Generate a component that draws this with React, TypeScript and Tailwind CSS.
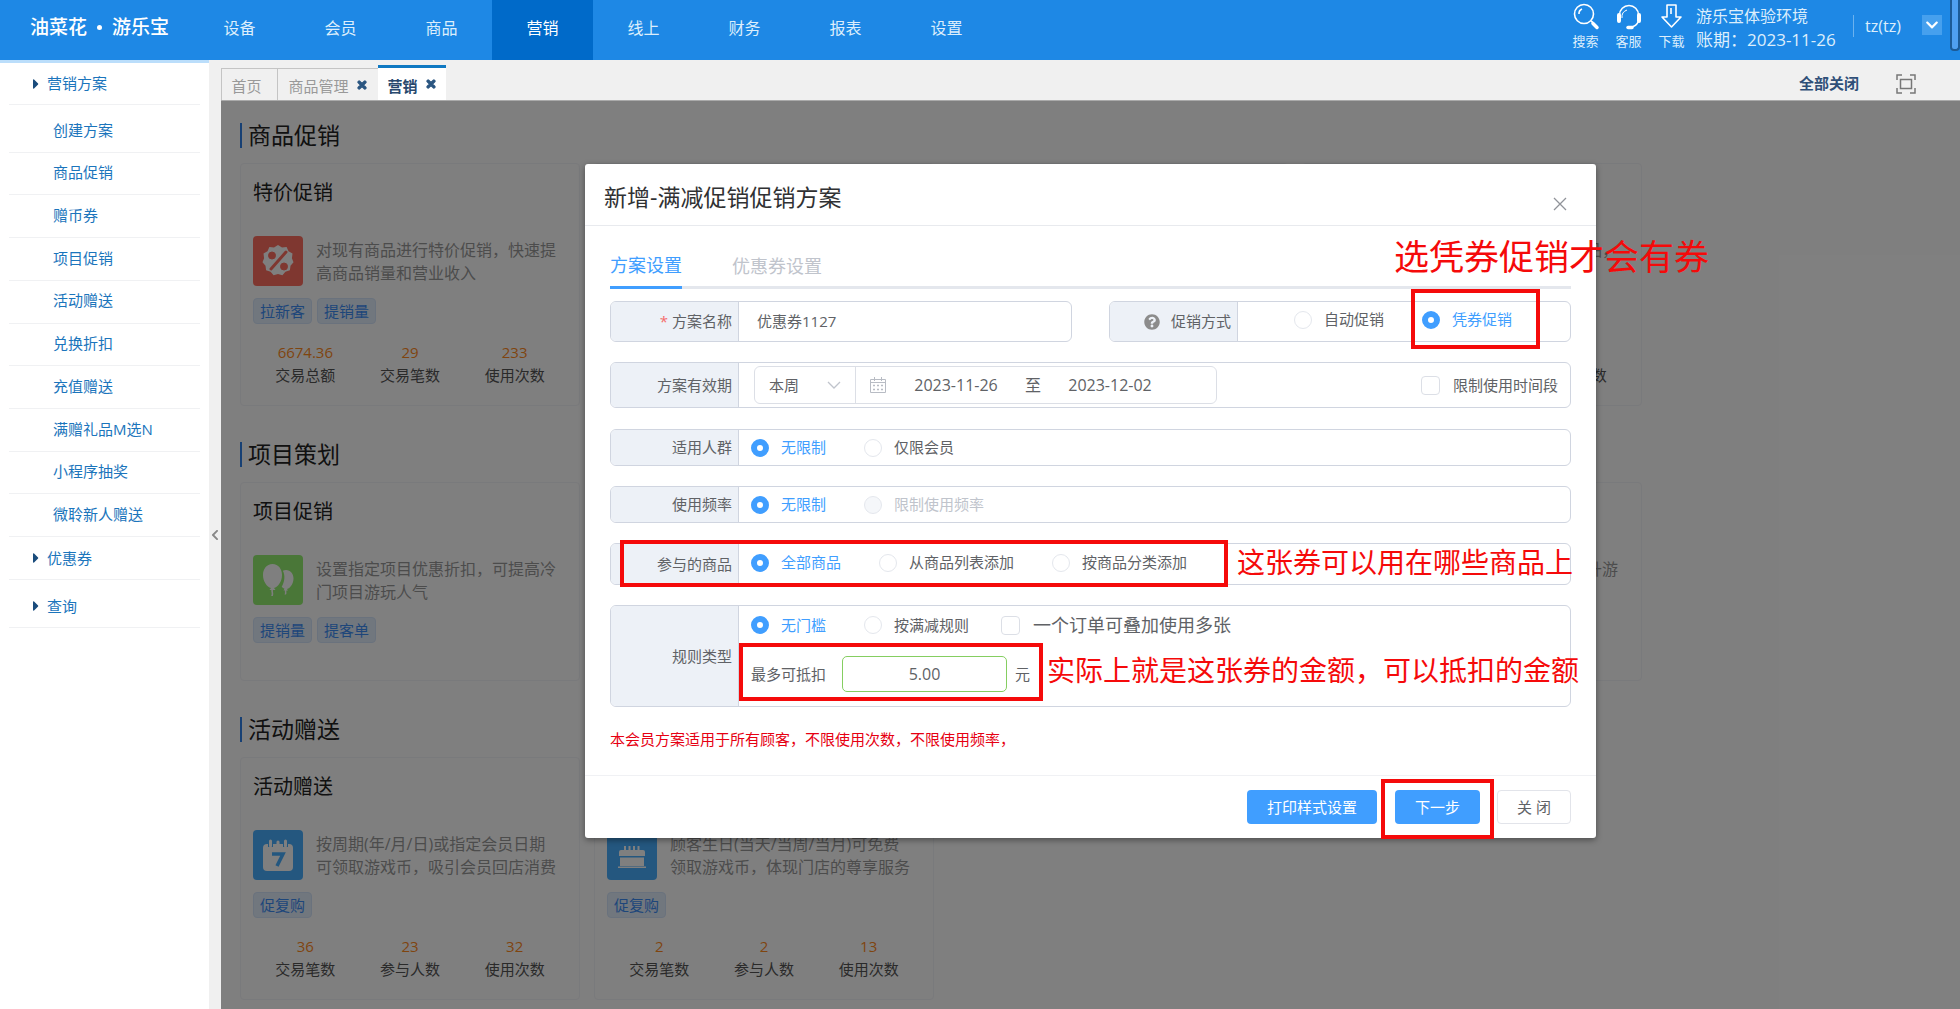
import { type ReactNode } from "react";
import { FaCaretRight, FaChevronDown, FaChevronLeft, FaQuestionCircle, FaTimes } from "react-icons/fa";

const navItems = ["设备", "会员", "商品", "营销", "线上", "财务", "报表", "设置"];

const planMenu = [
  "创建方案",
  "商品促销",
  "赠币券",
  "项目促销",
  "活动赠送",
  "兑换折扣",
  "充值赠送",
  "满赠礼品M选N",
  "小程序抽奖",
  "微聆新人赠送",
];

interface Promo {
  title?: string;
  desc?: string;
  icon: "percent" | "balloon" | "calendar" | "cake";
  tags?: string[];
  stats?: [string, string][];
}

const sections: { title: string; cards: Promo[] }[] = [
  {
    title: "商品促销",
    cards: [
      {
        title: "特价促销",
        desc: "对现有商品进行特价促销，快速提\n高商品销量和营业收入",
        icon: "percent",
        tags: ["拉新客", "提销量"],
        stats: [["6674.36", "交易总额"], ["29", "交易笔数"], ["233", "使用次数"]],
      },
      { icon: "percent" },
      { icon: "percent" },
      {
        desc: "满足消费金额条件即可换购商品，",
        icon: "percent",
        stats: [["", ""], ["", ""], ["", "使用次数"]],
      },
    ],
  },
  {
    title: "项目策划",
    cards: [
      {
        title: "项目促销",
        desc: "设置指定项目优惠折扣，可提高冷\n门项目游玩人气",
        icon: "balloon",
        tags: ["提销量", "提客单"],
      },
      { icon: "balloon" },
      { icon: "balloon" },
      { desc: "设置项目套票组合优惠方案提升游", icon: "balloon" },
    ],
  },
  {
    title: "活动赠送",
    cards: [
      {
        title: "活动赠送",
        desc: "按周期(年/月/日)或指定会员日期\n可领取游戏币，吸引会员回店消费",
        icon: "calendar",
        tags: ["促复购"],
        stats: [["36", "交易笔数"], ["23", "参与人数"], ["32", "使用次数"]],
      },
      {
        desc: "顾客生日(当天/当周/当月)可免费\n领取游戏币，体现门店的尊享服务",
        icon: "cake",
        tags: ["促复购"],
        stats: [["2", "交易笔数"], ["2", "参与人数"], ["13", "使用次数"]],
      },
    ],
  },
];

const iconBg = {
  percent: "bg-[#ff6f61]",
  balloon: "bg-[#94ee70]",
  calendar: "bg-[#48aeff]",
  cake: "bg-[#48aeff]",
};

function PromoIcon({ name }: { name: Promo["icon"] }) {
  return (
    <div className={`h-[50px] w-[50px] shrink-0 rounded ${iconBg[name]}`}>
      <svg viewBox="0 0 50 50" className="h-full w-full" fill="#fff">
        {name === "percent" && (
          <>
            <path d="M25 9l4 2.4 4.6-.4 1.9 4.2 4 2.4-.6 4.6 1.6 4-3 3.5-.6 4.6-4.5 1.4-3 3.5-4.4-1.2-4.4 1.2-3-3.5-4.5-1.4-.6-4.6-3-3.5 1.6-4-.6-4.6 4-2.4 1.9-4.2 4.6.4z" />
            <g stroke="#ff6f61" fill="#ff6f61">
              <path d="M33 16L18 33" strokeWidth="3" strokeLinecap="round" />
              <circle cx="19" cy="19.5" r="3.5" />
              <circle cx="31" cy="30.5" r="3.5" />
            </g>
          </>
        )}
        {name === "balloon" && (
          <>
            <path d="M33 15c4.500 0 7.500 4 7.500 8.500 0 5-3 9.500-6.500 10.500l1 1.500h-1.500c-.5 1.500.5 2.500-.5 4h-1.500c1-1.500 0-2.500.5-4h-1.500l1-1.700c-1-.3-2-1-2.800-2 2.800-4.500 3.800-11 1.200-16 1-.5 2-.8 3.100-.8z" />
            <path d="M19.500 9c6 0 9.500 5 9.500 11 0 6.500-4 12-8 13l1.500 2H20c-.5 2 1 3-.2 6h-1.600c1.200-2.500-.2-4 .1-6h-1.800l1.500-2c-4-1-8-6.500-8-13 0-6 3.500-11 9.500-11z" />
          </>
        )}
        {name === "calendar" && (
          <>
            <rect x="10" y="14" width="30" height="27" rx="4" />
            <path d="M17.500 10v7M32.500 10v7" stroke="#48aeff" strokeWidth="5" />
            <path d="M17.500 11v5M25 12v4M32.500 11v5" stroke="#fff" strokeWidth="3" strokeLinecap="round" />
            <path d="M19 24h11l-6 12" fill="none" stroke="#48aeff" strokeWidth="3.500" />
          </>
        )}
        {name === "cake" && (
          <>
            <path d="M18 16v5M22.500 16v5M27 16v5M31.500 16v5" stroke="#fff" strokeWidth="2" />
            <path d="M12 22q0-2 2-2h22q2 0 2 2v4H12zM13 27.500h24V36H13zM11 36.500h28V38H11z" />
          </>
        )}
      </svg>
    </div>
  );
}

function PromoCard({ promo }: { promo: Promo }) {
  return (
    <article className={`w-[340px] rounded border border-[#f2f4f8] px-3 pt-[14px] ${promo.stats ? "pb-[18px]" : "pb-[37px]"}`}>
      <h3 className="h-[30px] text-[20px] leading-[30px] text-[#222]">{promo.title}</h3>
      <div className="mt-[28px] flex h-[50px] gap-[13px]">
        <PromoIcon name={promo.icon} />
        <p className="mt-[3px] whitespace-pre-line text-[16px] leading-[23px] text-[#999]">{promo.desc}</p>
      </div>
      <div className="mt-[12px] flex h-[26px] gap-[5px]">
        {promo.tags?.map((tag) => (
          <span key={tag} className="rounded border border-[#d5e5fa] bg-[#e3eefc] px-[6px] text-[15px] leading-[24px] text-[#3d8df5]">
            {tag}
          </span>
        ))}
      </div>
      {promo.stats && (
        <dl className="mt-[17px] grid grid-cols-3 text-center text-[15px] leading-[23px]">
          {promo.stats.map(([value, label], i) => (
            <div key={i} className="flex flex-col-reverse">
              <dt className="h-[23px] text-[#555]">{label}</dt>
              <dd className="h-[23px] text-[#ff8a1e]">{value}</dd>
            </div>
          ))}
        </dl>
      )}
    </article>
  );
}

function Header() {
  return (
    <header className="relative flex h-[60px] shrink-0 items-stretch bg-[#1e88e5] text-white">
      <div className="flex w-[189px] shrink-0 items-center gap-[10px] pb-[5px] pl-[30px] text-[19px] font-medium">
        <span>油菜花</span>
        <i className="h-[5px] w-[5px] rounded-full bg-white" />
        <span>游乐宝</span>
      </div>
      <nav className="flex">
        {navItems.map((item) => (
          <a
            key={item}
            href="#"
            className={`flex w-[101px] items-center justify-center pb-[5px] text-[16px] ${item === "营销" ? "bg-[#006ac9]" : "text-[#dceefc]"}`}
          >
            {item}
          </a>
        ))}
      </nav>
      <div className="ml-auto flex pr-[18px] text-[#dceefc]">
        <HeaderAction label="搜索">
          <circle cx="12" cy="12" r="9.500" />
          <path d="M7 12a5 5 0 0 1 3-5M19 19l2 1.500" />
          <path d="M21 21.500l4 4" strokeWidth="3.500" strokeLinecap="round" />
        </HeaderAction>
        <HeaderAction label="客服">
          <path d="M4.500 13a9.500 9.500 0 0 1 19 0M23.500 19q-2 5-6 5.500" />
          <path d="M7 16a7.500 7.500 0 0 1 5-8" strokeWidth="1" />
          <path d="M4 13v6M24 13v6" strokeWidth="4" strokeLinecap="round" />
          <path d="M13 25.500h4" strokeWidth="3.500" strokeLinecap="round" />
        </HeaderAction>
        <HeaderAction label="下载">
          <path d="M9 3h9v12h5l-9.500 10L4 15h5zM13 6v6" strokeLinejoin="round" />
        </HeaderAction>
        <div className="ml-[3px] flex items-start">
          <div className="w-[157px] pt-[5px] text-[16px] leading-[23px]">
            <div>游乐宝体验环境</div>
            <div className="text-[17px]">账期：2023-11-26</div>
          </div>
          <div className="mt-[15px] w-[69px] border-l border-[#6bb2ef] pl-[11px] text-[16px] leading-[22px]">tz(tz)</div>
          <button aria-label="账户" className="mt-[15px] flex h-5 w-5 items-center justify-center bg-[#46a0ee] text-white">
            <FaChevronDown className="h-[14px] w-[14px]" />
          </button>
        </div>
      </div>
      <i className="absolute right-0 top-0 h-[51px] w-[10px] rounded-b border-2 border-t-0 border-[#1c5a96] bg-[#4f9ff0]" />
    </header>
  );
}

function HeaderAction({ label, children }: { label: string; children: ReactNode }) {
  return (
    <button className="flex w-[43px] flex-col items-center pt-[2px] text-[13px] leading-[23px]">
      <svg viewBox="0 0 28 28" className="h-7 w-7" fill="none" stroke="#fff" strokeWidth="1.6">
        {children}
      </svg>
      {label}
    </button>
  );
}

function Sidebar() {
  return (
    <aside className="w-[209px] shrink-0 border-t-[3px] border-[#bbdefb] bg-white px-[9px] text-[15px] text-[#1b75bc]">
      <MenuGroup label="营销方案" className="h-[42px]" />
      <ul className="flex h-[432px] flex-col pt-[5px]">
        {planMenu.map((item) => (
          <li key={item} className="flex flex-1 items-center border-b border-[#f0f1f3] pb-[2px] pl-[44px]">
            <a href="#">{item}</a>
          </li>
        ))}
      </ul>
      <MenuGroup label="优惠券" className="h-[43px]" />
      <MenuGroup label="查询" className="h-[48px] pt-[5px]" />
    </aside>
  );
}

function MenuGroup({ label, className }: { label: string; className: string }) {
  return (
    <a href="#" className={`flex items-center gap-[6px] border-b border-[#f0f1f3] pl-[22px] ${className}`}>
      <FaCaretRight className="h-4 w-[10px] text-[#1a4c7c]" />
      {label}
    </a>
  );
}

function CloseMark() {
  return <FaTimes className="mb-1 h-3 w-3 text-[#2a5580]" stroke="currentColor" strokeWidth={50} />;
}

function TabBar() {
  return (
    <div className="flex h-[41px] shrink-0 items-end border-b border-[#aaa] bg-[#f0f0f0] text-[15px] text-[#999]">
      <button className="h-8 w-[57px] border border-b-0 border-[#c4c4c4] pr-[6px] pt-1">首页</button>
      <button className="flex h-8 w-[100px] items-center justify-center gap-[7px] border-t border-[#c4c4c4] pt-1">
        商品管理 <CloseMark />
      </button>
      <button className="flex h-[35px] w-[68px] items-center justify-center gap-[7px] border-t-[3px] border-[#1079c2] bg-white pt-1 font-bold text-[#28486e]">
        营销 <CloseMark />
      </button>
      <button className="mb-[6px] ml-auto font-bold text-[#2f4f78]">全部关闭</button>
      <button aria-label="全屏" className="mb-[6px] ml-[37px] mr-[44px]">
        <svg viewBox="0 0 20 20" className="h-5 w-5" fill="none" stroke="#777" strokeWidth="1.500">
          <path d="M1 6V1h5M14 1h5v5M19 14v5h-5M6 19H1v-5M4.500 5.500h11v9h-11z" />
        </svg>
      </button>
    </div>
  );
}

interface ChoiceProps {
  name: string;
  label: string;
  checked?: boolean;
  disabled?: boolean;
}

function Choice({ name, label, checked, disabled }: ChoiceProps) {
  return (
    <label className={`flex items-center gap-3 ${checked ? "text-[#409eff]" : disabled ? "text-[#c0c4cc]" : ""}`}>
      <input
        type="radio"
        name={name}
        defaultChecked={checked}
        disabled={disabled}
        className="h-[18px] w-[18px] appearance-none rounded-full border border-[#e4e7ed] bg-white checked:border-[6px] checked:border-[#409eff] disabled:bg-[#f5f7fa]"
      />
      {label}
    </label>
  );
}

function Check({ label, className = "" }: { label: string; className?: string }) {
  return (
    <label className={`flex items-center gap-[13px] ${className}`}>
      <input type="checkbox" className="h-[19px] w-[19px] appearance-none rounded-sm border border-[#dcdfe6] bg-white checked:bg-[#409eff]" />
      {label}
    </label>
  );
}

function Row({ label, className, children }: { label: ReactNode; className: string; children: ReactNode }) {
  return (
    <div className={`flex overflow-hidden rounded-md border border-[#d0d5e0] ${className}`}>
      <div className="flex w-[128px] shrink-0 items-center justify-end border-r border-[#d0d5e0] bg-[#edf1f7] pr-[6px]">{label}</div>
      <div className="flex flex-1 items-center">{children}</div>
    </div>
  );
}

function PlanDialog() {
  return (
    <section role="dialog" aria-label="新增-满减促销促销方案" className="relative mt-[63px] w-full max-w-[1011px] rounded-[3px] bg-white text-[15px] text-[#606266] shadow-[0_2px_6px_rgba(0,0,0,0.4)]">
      <div className="flex h-[62px] items-center justify-between border-b border-[#e8eaee] pl-[19px] pr-[29px] pt-[6px]">
        <h2 className="text-[23px] text-[#303133]">新增-满减促销促销方案</h2>
        <button aria-label="关闭" className="mt-3">
          <svg viewBox="0 0 14 14" className="h-[14px] w-[14px]" fill="none" stroke="#909399" strokeWidth="1.300">
            <path d="M1 1l12 12M13 1L1 13" />
          </svg>
        </button>
      </div>

      <div className="px-[25px] pb-6 pt-6">
        <div className="flex h-[39px] gap-[50px] border-b-[3px] border-[#e4e7ed] text-[18px]">
          <button className="-mb-[3px] border-b-[3px] border-[#409eff] pb-[6px] text-[#409eff]">方案设置</button>
          <button className="pb-[3px] text-[#c0c4cc]">优惠券设置</button>
        </div>

        <form className="mt-3 flex flex-col gap-5">
          <div className="grid grid-cols-2 gap-[37px]">
            <Row className="h-[41px]" label={<label htmlFor="plan-name"><span className="mr-1 text-[#f56c6c]">*</span>方案名称</label>}>
              <input id="plan-name" defaultValue="优惠券1127" className="h-full w-full px-[18px] pb-[3px] outline-none" />
            </Row>
            <Row className="h-[41px]" label={<span className="flex items-center gap-[11px]"><FaQuestionCircle className="h-4 w-4 text-[#8c8c8c]" />促销方式</span>}>
              <div className="flex gap-[38px] pb-1 pl-[56px]">
                <Choice name="mode" label="自动促销" />
                <Choice name="mode" label="凭券促销" checked />
              </div>
            </Row>
          </div>

          <Row className="h-[46px]" label="方案有效期">
            <div className="ml-[15px] flex h-[38px] w-[463px] items-center rounded-md border border-[#dcdfe6] text-[16px]">
              <div className="relative h-full w-[101px] border-r border-[#dcdfe6]">
                <select aria-label="周期" className="h-full w-full appearance-none pl-[14px] text-[15px] outline-none">
                  <option>本周</option>
                </select>
                <svg viewBox="0 0 14 8" className="pointer-events-none absolute right-[14px] top-[14px] h-2 w-[14px]" fill="none" stroke="#c0c4cc" strokeWidth="1.300">
                  <path d="M1 1l6 6 6-6" />
                </svg>
              </div>
              <svg viewBox="0 0 16 16" className="ml-[14px] h-4 w-4" fill="none" stroke="#b8bcc4">
                <path d="M.5 2.500h15v13H.5zM.5 5.500h15M4.500 0v4M11.500 0v4" />
                <path d="M3 8.500h10M3 12.500h10" strokeDasharray="2 2" strokeWidth="1.400" />
              </svg>
              <input aria-label="开始日期" defaultValue="2023-11-26" className="ml-[14px] w-[112px] text-center outline-none" />
              <span className="px-[13px]">至</span>
              <input aria-label="结束日期" defaultValue="2023-12-02" className="w-[112px] text-center outline-none" />
            </div>
            <Check label="限制使用时间段" className="ml-auto pr-3" />
          </Row>

          <Row className="mt-[1px] h-[37px]" label="适用人群">
            <div className="flex gap-[38px] pl-3">
              <Choice name="crowd" label="无限制" checked />
              <Choice name="crowd" label="仅限会员" />
            </div>
          </Row>

          <Row className="h-[37px]" label="使用频率">
            <div className="flex gap-[38px] pl-3">
              <Choice name="frequency" label="无限制" checked />
              <Choice name="frequency" label="限制使用频率" disabled />
            </div>
          </Row>

          <Row className="h-[42px]" label="参与的商品">
            <div className="flex gap-[38px] pb-[3px] pl-3">
              <Choice name="goods" label="全部商品" checked />
              <Choice name="goods" label="从商品列表添加" />
              <Choice name="goods" label="按商品分类添加" />
            </div>
          </Row>

          <Row className="h-[102px]" label="规则类型">
            <div className="flex flex-col gap-[17px] pb-[9px] pl-3">
              <div className="flex h-7 items-center gap-[38px]">
                <Choice name="rule" label="无门槛" checked />
                <Choice name="rule" label="按满减规则" />
                <Check label="一个订单可叠加使用多张" className="-ml-[6px] text-[18px]" />
              </div>
              <div className="flex items-center">
                <label htmlFor="deduct">最多可抵扣</label>
                <input id="deduct" defaultValue="5.00" className="ml-4 h-9 w-[165px] rounded-[5px] border border-[#85ce61] text-center text-[16px] outline-none" />
                <span className="ml-2">元</span>
              </div>
            </div>
          </Row>
        </form>

        <p className="mt-5 leading-6 text-[#e60012]">本会员方案适用于所有顾客，不限使用次数，不限使用频率，</p>
      </div>

      <div className="flex justify-end border-t border-[#f0f1f4] px-[25px] py-[14px]">
        <button className="h-[34px] rounded bg-[#409eff] px-5 text-white">打印样式设置</button>
        <button className="ml-[18px] h-[34px] rounded bg-[#409eff] px-5 text-white">下一步</button>
        <button className="ml-[17px] h-[34px] rounded border border-[#e2e4ea] px-[19px]">关 闭</button>
      </div>

      {/* 操作说明标注 */}
      <div className="pointer-events-none whitespace-nowrap text-[28px] leading-10 text-[#f50a0a]">
        <i className="absolute left-[826px] top-[125px] h-[60px] w-[129px] border-4 border-[#f50a0a]" />
        <i className="absolute left-[35px] top-[376px] h-[47px] w-[608px] border-4 border-[#f50a0a]" />
        <i className="absolute left-[154px] top-[479px] h-[58px] w-[304px] border-4 border-[#f50a0a]" />
        <i className="absolute left-[796px] top-[615px] h-[60px] w-[113px] border-4 border-[#f50a0a]" />
        <span className="absolute left-[809px] top-[73px] text-[35px]">选凭券促销才会有券</span>
        <span className="absolute left-[652px] top-[378px]">这张券可以用在哪些商品上</span>
        <span className="absolute left-[462px] top-[486px]">实际上就是这张券的金额，可以抵扣的金额</span>
      </div>
    </section>
  );
}

export default function App() {
  return (
    <div className="flex h-screen flex-col overflow-hidden bg-[#f0f0f0] font-['Open_Sans','Noto_Sans_CJK_SC',sans-serif]">
      <Header />
      <div className="flex min-h-0 flex-1">
        <Sidebar />
        <button aria-label="收起菜单" className="flex w-3 shrink-0 items-center justify-center text-[#888]">
          <FaChevronLeft className="h-3 w-2" />
        </button>
        <div className="flex min-w-0 flex-1 flex-col">
          <TabBar />
          <main className="relative min-h-0 flex-1 overflow-hidden bg-white">
            <div className="flex flex-col gap-[36px] pl-[19px] pt-[22px]">
              {sections.map((section) => (
                <section key={section.title}>
                  <h2 className="mb-[15px] border-l-2 border-[#2f80e8] pl-[6px] text-[23px] leading-[25px] text-[#222]">{section.title}</h2>
                  <div className="flex gap-[14px]">
                    {section.cards.map((promo, i) => (
                      <PromoCard key={i} promo={promo} />
                    ))}
                  </div>
                </section>
              ))}
            </div>
            <div className="absolute inset-0 flex items-start justify-center bg-black/50">
              <PlanDialog />
            </div>
          </main>
        </div>
      </div>
    </div>
  );
}
